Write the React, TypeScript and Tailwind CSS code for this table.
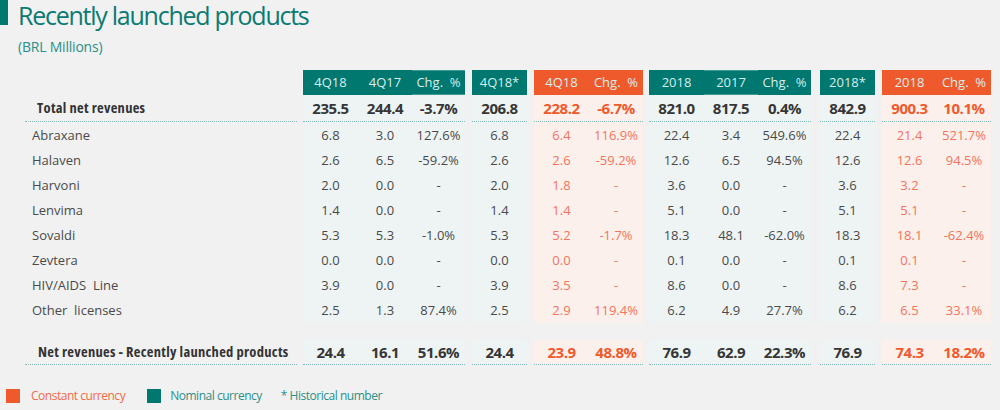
import React from "react";

type Tone = "teal" | "orange";

type Col = { h: string; w: string };
type Group = { tone: Tone; gap: string; cols: Col[] };

const GROUPS: Group[] = [
  { tone: "teal", gap: "ml-[6px]", cols: [{ h: "4Q18", w: "w-[55px]" }, { h: "4Q17", w: "w-[54px]" }, { h: "Chg.  %", w: "w-[53px]" }] },
  { tone: "teal", gap: "ml-[7px]", cols: [{ h: "4Q18*", w: "w-[55px]" }] },
  { tone: "orange", gap: "ml-[7px]", cols: [{ h: "4Q18", w: "w-[55px]" }, { h: "Chg.  %", w: "w-[54px]" }] },
  { tone: "teal", gap: "ml-[6px]", cols: [{ h: "2018", w: "w-[55px]" }, { h: "2017", w: "w-[54px]" }, { h: "Chg.  %", w: "w-[53px]" }] },
  { tone: "teal", gap: "ml-[9px]", cols: [{ h: "2018*", w: "w-[55px]" }] },
  { tone: "orange", gap: "ml-[7px]", cols: [{ h: "2018", w: "w-[55px]" }, { h: "Chg.  %", w: "w-[54px]" }] },
];

const TOTAL = ["235.5", "244.4", "-3.7%", "206.8", "228.2", "-6.7%", "821.0", "817.5", "0.4%", "842.9", "900.3", "10.1%"];
const FINAL = ["24.4", "16.1", "51.6%", "24.4", "23.9", "48.8%", "76.9", "62.9", "22.3%", "76.9", "74.3", "18.2%"];

const ROWS: [string, string[]][] = [
  ["Abraxane", ["6.8", "3.0", "127.6%", "6.8", "6.4", "116.9%", "22.4", "3.4", "549.6%", "22.4", "21.4", "521.7%"]],
  ["Halaven", ["2.6", "6.5", "-59.2%", "2.6", "2.6", "-59.2%", "12.6", "6.5", "94.5%", "12.6", "12.6", "94.5%"]],
  ["Harvoni", ["2.0", "0.0", "-", "2.0", "1.8", "-", "3.6", "0.0", "-", "3.6", "3.2", "-"]],
  ["Lenvima", ["1.4", "0.0", "-", "1.4", "1.4", "-", "5.1", "0.0", "-", "5.1", "5.1", "-"]],
  ["Sovaldi", ["5.3", "5.3", "-1.0%", "5.3", "5.2", "-1.7%", "18.3", "48.1", "-62.0%", "18.3", "18.1", "-62.4%"]],
  ["Zevtera", ["0.0", "0.0", "-", "0.0", "0.0", "-", "0.1", "0.0", "-", "0.1", "0.1", "-"]],
  ["HIV/AIDS  Line", ["3.9", "0.0", "-", "3.9", "3.5", "-", "8.6", "0.0", "-", "8.6", "7.3", "-"]],
  ["Other  licenses", ["2.5", "1.3", "87.4%", "2.5", "2.9", "119.4%", "6.2", "4.9", "27.7%", "6.2", "6.5", "33.1%"]],
];

// column offset of each group inside the flat value arrays
const offsets = GROUPS.reduce<number[]>((acc, g, i) => {
  acc.push(i === 0 ? 0 : acc[i - 1] + GROUPS[i - 1].cols.length);
  return acc;
}, []);

function GroupColumn({ group, start }: { group: Group; start: number }) {
  const orange = group.tone === "orange";
  const head = orange ? "bg-[#ef5a2c]" : "bg-[#00776f]";
  const body = orange ? "bg-[#fcf0ed]" : "bg-[#eef4f4]";
  const bold = orange ? "text-[#ef5a2c]" : "text-[#363636]";
  const thin = orange ? "text-[#f2745a]" : "text-[#4a4a4a]";

  return (
    <div className={`flex flex-col ${group.gap}`}>
      <div className={`flex h-[25px] ${head} text-[#d7eeec] text-[13px]`}>
        {group.cols.map((c, i) => (
          <div
            key={i}
            className={`${c.w} flex items-center justify-center whitespace-pre ${
              !orange && group.cols.length === 3 && i === (start === 0 ? 2 : 1)
                ? "border-t border-b border-[#3f9a93]"
                : ""
            }`}
          >
            {c.h}
          </div>
        ))}
      </div>
      <div className={`flex h-[27px] ${body} border-b border-dotted border-[#7fbcb7] font-bold text-[15px] tracking-[-0.03em] ${bold}`}>
        {group.cols.map((c, i) => (
          <div key={i} className={`${c.w} flex items-center justify-center`}>
            {TOTAL[start + i]}
          </div>
        ))}
      </div>
      <div className={`flex flex-col ${body} pt-[1px] ${thin} text-[13px]`}>
        {ROWS.map(([name, vals]) => (
          <div key={name} className="flex h-[25px]">
            {group.cols.map((c, i) => (
              <div key={i} className={`${c.w} flex items-center justify-center`}>
                {vals[start + i]}
              </div>
            ))}
          </div>
        ))}
      </div>
      <div className={`flex h-[25px] mt-[17px] ${body} border-b border-dotted border-[#7fbcb7] font-bold text-[15px] tracking-[-0.03em] ${bold}`}>
        {group.cols.map((c, i) => (
          <div key={i} className={`${c.w} flex items-center justify-center`}>
            {FINAL[start + i]}
          </div>
        ))}
      </div>
    </div>
  );
}

export default function App() {
  return (
    <div className="w-[1000px] h-[410px] bg-[#f1f1f1] overflow-hidden font-['Open_Sans',sans-serif]">
      <div className="flex items-start">
        <div className="w-2 h-[25px] bg-[#00776f]" />
        <h1 className="ml-[10px] pt-[3px] text-[25px] leading-[24px] text-[#0b7a72] tracking-[-0.05em]">
          Recently launched products
        </h1>
      </div>
      <div className="pl-[18px] mt-[10px] text-[14px] leading-[20px] text-[#2b8f89] tracking-[-0.015em]">(BRL Millions)</div>

      <div className="flex mt-[13px]">
        <div className="w-[297px] flex flex-col text-[#3b3b3b]">
          <div className="h-[25px]" />
          <div className="h-[27px] ml-[25px] border-b border-dotted border-[#7fbcb7] flex items-center pl-[12px] font-bold text-[14.5px] font-stretch-semi-condensed tracking-[0.02em] text-[#333]">
            Total net revenues
          </div>
          <div className="flex flex-col pt-[1px] pl-[32px] text-[13px] text-[#4a4a4a]">
            {ROWS.map(([name]) => (
              <div key={name} className="h-[25px] flex items-center whitespace-pre">
                {name}
              </div>
            ))}
          </div>
          <div className="h-[25px] mt-[17px] ml-[25px] border-b border-dotted border-[#7fbcb7] flex items-center pl-[13px] font-bold text-[14.5px] font-stretch-semi-condensed tracking-[0.02em] text-[#333] whitespace-nowrap">
            Net revenues - Recently launched products
          </div>
        </div>
        {GROUPS.map((g, i) => (
          <GroupColumn key={i} group={g} start={offsets[i]} />
        ))}
      </div>

      <div className="flex items-center mt-[22px] pl-[6px] text-[12px] tracking-[-0.04em]">
        <div className="w-[14px] h-[14px] bg-[#ef5a2c]" />
        <span className="ml-[11px] text-[#f06a48]">Constant currency</span>
        <div className="ml-[22px] w-[14px] h-[14px] bg-[#00776f]" />
        <span className="ml-[9px] text-[#2b8f89]">Nominal currency</span>
        <span className="ml-[19px] text-[#2b8f89]">* Historical number</span>
      </div>
    </div>
  );
}
